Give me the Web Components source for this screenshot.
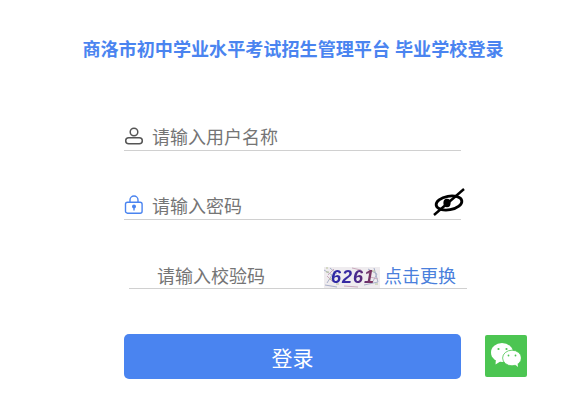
<!DOCTYPE html>
<html lang="zh">
<head>
<meta charset="utf-8">
<title>登录</title>
<style>
  html, body { margin: 0; padding: 0; background: #fff; overflow: hidden; }
  body { font-family: "Liberation Sans", "Noto Sans CJK SC", sans-serif; }
</style>
</head>
<body>
<login-page>
  <login-field slot="fields" placeholder="请输入用户名称">
    <svg slot="icon" width="20" height="20" viewBox="0 0 20 20" fill="none" stroke="#555" stroke-width="1.5">
      <circle cx="10" cy="7" r="3.800"/>
      <rect x="1.700" y="12.700" width="16.600" height="6" rx="3"/>
    </svg>
  </login-field>
  <login-field slot="fields" placeholder="请输入密码" gap="38">
    <svg slot="icon" width="20" height="20" viewBox="0 0 20 20" fill="none" stroke="#4a84f0" stroke-width="1.400">
      <path d="M6 8.500V6a4 4 0 0 1 8 0v2.500"/>
      <rect x="1.500" y="8.200" width="16.600" height="11" rx="2"/>
      <circle cx="10" cy="12.500" r="1.300" fill="#4a84f0"/>
      <path d="M10 13.500v3"/>
    </svg>
    <svg slot="end" class="eye" width="32" height="28" viewBox="0 0 32 28" fill="none" stroke="#000" stroke-width="2.800">
      <ellipse cx="16" cy="15" rx="13" ry="6.800" transform="rotate(-10 16 15)"/>
      <ellipse cx="14" cy="15" rx="3.600" ry="4.200" fill="#000" stroke="none"/>
      <path d="M1 27 31 1" stroke-width="2.400"/>
    </svg>
  </login-field>
  <login-captcha slot="fields" placeholder="请输入校验码" code="6261" action="点击更换"></login-captcha>
  <login-button slot="button">登录</login-button>
  <wechat-badge slot="button"></wechat-badge>
</login-page>

<template id="login-page-tpl">
  <style>
    :host {
      display: block;
      width: 584px;
      height: 407px;
      box-sizing: border-box;
      padding: 38px 0 0 124px;
      font-family: "Liberation Sans", "Noto Sans CJK SC", sans-serif;
    }
    h1 {
      margin: 0 0 0 -124px;
      width: 584px;
      padding-left: 2px;
      box-sizing: border-box;
      text-align: center;
      font-size: 18.100px;
      line-height: 24px;
      font-weight: bold;
      color: #4a84f0;
    }
    .fields { margin-top: 58px; width: 337px; }
    .actions { display: flex; gap: 24px; margin-top: 45px; align-items: flex-start; }
  </style>
  <h1>商洛市初中学业水平考试招生管理平台 毕业学校登录</h1>
  <div class="fields"><slot name="fields"></slot></div>
  <div class="actions"><slot name="button"></slot></div>
</template>

<template id="login-field-tpl">
  <style>
    :host { display: block; }
    .row {
      display: flex;
      align-items: center;
      height: 30px;
      border-bottom: 1px solid #d0d0d0;
      font-size: 18px;
      color: #757575;
    }
    .icon { display: flex; width: 28px; flex: none; }
    .text { flex: 1; line-height: 30px; padding-top: 5px; }
    .end { display: flex; margin: -4px -4px 0 0; }
  </style>
  <div class="row">
    <span class="icon"><slot name="icon"></slot></span>
    <span class="text"></span>
    <span class="end"><slot name="end"></slot></span>
  </div>
</template>

<template id="login-captcha-tpl">
  <style>
    :host { display: block; margin: 38px 0 0 5px; width: 338px; }
    .row {
      display: flex;
      align-items: flex-end;
      height: 30px;
      border-bottom: 1px solid #d0d0d0;
      font-size: 18px;
      color: #757575;
    }
    .text { width: 195px; padding-left: 28px; box-sizing: border-box; line-height: 22px; }
    .code {
      display: flex;
      align-items: center;
      justify-content: center;
      position: relative;
      flex: none;
      width: 56px;
      height: 21px;
      padding-left: 2px;
      box-sizing: border-box;
      overflow: hidden;
      background: #efecef;
      font: italic bold 18px/21px "Liberation Sans", sans-serif;
      letter-spacing: 1px;
    }
    .code svg { position: absolute; inset: 0; }
    .code span {
      position: relative;
      background: linear-gradient(90deg, #2c2aa6, #3a2aa0 45%, #5a2a78 70%, #8a3a58);
      -webkit-background-clip: text;
      background-clip: text;
      color: transparent;
    }
    a {
      margin-left: 4px;
      line-height: 22px;
      color: #4a7fdc;
      text-decoration: none;
      cursor: pointer;
    }
  </style>
  <div class="row">
    <span class="text"></span>
    <span class="code">
      <svg width="56" height="21" viewBox="0 0 56 21" fill="none" stroke-width="1">
        <path d="M0 3 8 8 3 16M6 1l7 6M44 2l9 5-5 9M50 1l4 14M1 18l12 2M40 18l14-3" stroke="#a9b0c9"/>
        <path d="M3 9l6 6M10 2l-6 6M46 10l8 2M42 5l5 3M28 1l9 2M20 19l14 1" stroke="#c9a9bd"/>
        <path d="M2 5h3M5 12h3M48 4h3M51 17h3M12 17h3M2 1h2" stroke="#b9c49a"/>
      </svg>
      <span class="digits"></span>
    </span>
    <a></a>
  </div>
</template>

<template id="login-button-tpl">
  <style>
    :host { display: block; flex: none; }
    button {
      display: block;
      width: 337px;
      height: 45px;
      border: 0;
      border-radius: 5px;
      background: #4a84f0;
      color: #fff;
      font: 21px "Liberation Sans", "Noto Sans CJK SC", sans-serif;
      padding: 0;
      cursor: pointer;
    }
  </style>
  <button><slot></slot></button>
</template>

<template id="wechat-badge-tpl">
  <style>
    :host {
      display: flex;
      align-items: center;
      justify-content: center;
      flex: none;
      width: 42px;
      height: 42px;
      margin-top: 1px;
      border-radius: 2px;
      background: #4cc552;
    }
    svg { display: block; margin-bottom: 2px; }
  </style>
  <svg width="30" height="24" viewBox="0 0 30 24" fill="#fff">
    <ellipse cx="11" cy="9.500" rx="11" ry="9.500"/>
    <path d="M5 15 4.500 21.500 10 18z"/>
    <ellipse cx="21" cy="15" rx="9.400" ry="7.800" stroke="#4cc552" stroke-width=".8"/>
    <path d="M24 21.500 27 24 26.500 20z"/>
    <circle cx="7.500" cy="6" r="1.100" fill="#4cc552"/>
    <circle cx="15.500" cy="6" r="1.100" fill="#4cc552"/>
    <circle cx="17.500" cy="12.500" r=".9" fill="#4cc552"/>
    <circle cx="24.500" cy="12.500" r=".9" fill="#4cc552"/>
  </svg>
</template>

<script>
  function cloneTemplate (id) {
    return document.getElementById(id).content.cloneNode(true)
  }

  class LoginPage extends HTMLElement {
    constructor () {
      super()
      this.shadow = this.attachShadow({ mode: 'open' })
      this.shadow.appendChild(cloneTemplate('login-page-tpl'))
    }
  }

  class LoginField extends HTMLElement {
    constructor () {
      super()
      this.shadow = this.attachShadow({ mode: 'open' })
      this.shadow.appendChild(cloneTemplate('login-field-tpl'))
    }

    connectedCallback () {
      this.shadow.querySelector('.text').textContent = this.getAttribute('placeholder')
      this.style.marginTop = (this.getAttribute('gap') || 0) + 'px'
    }
  }

  class LoginCaptcha extends HTMLElement {
    constructor () {
      super()
      this.shadow = this.attachShadow({ mode: 'open' })
      this.shadow.appendChild(cloneTemplate('login-captcha-tpl'))
    }

    connectedCallback () {
      this.shadow.querySelector('.text').textContent = this.getAttribute('placeholder')
      this.shadow.querySelector('.digits').textContent = this.getAttribute('code')
      this.shadow.querySelector('a').textContent = this.getAttribute('action')
    }
  }

  class LoginButton extends HTMLElement {
    constructor () {
      super()
      this.shadow = this.attachShadow({ mode: 'open' })
      this.shadow.appendChild(cloneTemplate('login-button-tpl'))
    }
  }

  class WechatBadge extends HTMLElement {
    constructor () {
      super()
      this.shadow = this.attachShadow({ mode: 'open' })
      this.shadow.appendChild(cloneTemplate('wechat-badge-tpl'))
    }
  }

  customElements.define('login-page', LoginPage)
  customElements.define('login-field', LoginField)
  customElements.define('login-captcha', LoginCaptcha)
  customElements.define('login-button', LoginButton)
  customElements.define('wechat-badge', WechatBadge)
</script>
</body>
</html>
